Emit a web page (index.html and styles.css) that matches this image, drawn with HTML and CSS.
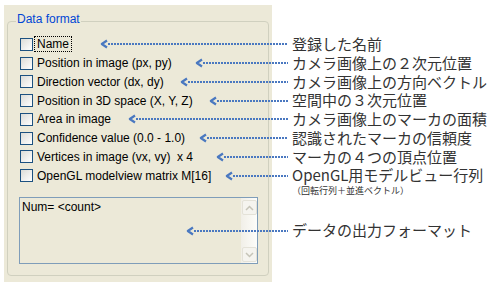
FILE: index.html
```html
<!DOCTYPE html>
<html lang="ja">
  <head>
    <meta charset="utf-8" />

    <title>Data format</title>

    <link rel="stylesheet" href="styles.css">
  </head>

  <body>
    <div class="panel">
      <fieldset class="group">
        <legend>Data format</legend>

        <div class="option">
          <input type="checkbox" class="check" />
          <span class="label focused">Name</span>
          <span class="arrow"><svg width="8" height="10"><polyline points="7,1.5 1.8,5 7,8.5" /></svg><span class="dots"></span></span>
          <span class="note">登録した名前</span>
        </div>

        <div class="option">
          <input type="checkbox" class="check" />
          <span class="label">Position in image (px, py)</span>
          <span class="arrow"><svg width="8" height="10"><polyline points="7,1.5 1.8,5 7,8.5" /></svg><span class="dots"></span></span>
          <span class="note">カメラ画像上の２次元位置</span>
        </div>

        <div class="option">
          <input type="checkbox" class="check" />
          <span class="label">Direction vector (dx, dy)</span>
          <span class="arrow"><svg width="8" height="10"><polyline points="7,1.5 1.8,5 7,8.5" /></svg><span class="dots"></span></span>
          <span class="note">カメラ画像上の方向ベクトル</span>
        </div>

        <div class="option">
          <input type="checkbox" class="check" />
          <span class="label">Position in 3D space (X, Y, Z)</span>
          <span class="arrow"><svg width="8" height="10"><polyline points="7,1.5 1.8,5 7,8.5" /></svg><span class="dots"></span></span>
          <span class="note">空間中の３次元位置</span>
        </div>

        <div class="option">
          <input type="checkbox" class="check" />
          <span class="label">Area in image</span>
          <span class="arrow"><svg width="8" height="10"><polyline points="7,1.5 1.8,5 7,8.5" /></svg><span class="dots"></span></span>
          <span class="note">カメラ画像上のマーカの面積</span>
        </div>

        <div class="option">
          <input type="checkbox" class="check" />
          <span class="label">Confidence value (0.0 - 1.0)</span>
          <span class="arrow"><svg width="8" height="10"><polyline points="7,1.5 1.8,5 7,8.5" /></svg><span class="dots"></span></span>
          <span class="note">認識されたマーカの信頼度</span>
        </div>

        <div class="option">
          <input type="checkbox" class="check" />
          <span class="label">Vertices in image (vx, vy)&nbsp; x 4</span>
          <span class="arrow"><svg width="8" height="10"><polyline points="7,1.5 1.8,5 7,8.5" /></svg><span class="dots"></span></span>
          <span class="note">マーカの４つの頂点位置</span>
        </div>

        <div class="option">
          <input type="checkbox" class="check" />
          <span class="label">OpenGL modelview matrix M[16]</span>
          <span class="arrow"><svg width="8" height="10"><polyline points="7,1.5 1.8,5 7,8.5" /></svg><span class="dots"></span></span>
          <span class="note">OpenGL用モデルビュー行列<span class="sub">（回転行列＋並進ベクトル）</span></span>
        </div>

        <div class="output-row">
          <div class="output">
            <p class="output-text">Num= &lt;count&gt;</p>
            <div class="scrollbar">
              <span class="scroll-btn"><svg width="9" height="6"><polyline points="1,5 4.5,1.5 8,5" /></svg></span>
              <span class="scroll-btn"><svg width="9" height="6"><polyline points="1,1 4.5,4.5 8,1" /></svg></span>
            </div>
          </div>
          <span class="arrow"><svg width="8" height="10"><polyline points="7,1.5 1.8,5 7,8.5" /></svg><span class="dots"></span></span>
          <span class="note">データの出力フォーマット</span>
        </div>
      </fieldset>
    </div>
  </body>
</html>
```

FILE: styles.css
```css
body {
    margin: 0;
    background-color: white;
    font-family: "Liberation Sans", Arial, sans-serif;
}

.panel {
    box-sizing: border-box;
    width: 268px;
    height: 277px;
    margin: 5px 0 0 4px;
    padding: 7px 0 0 3px;
    background-color: #ECE9D8;
}

.group {
    box-sizing: border-box;
    width: 262px;
    min-width: 0;
    margin: 0;
    padding: 5px 0 11px 12px;
    border: 1px solid #D0D0BF;
    border-radius: 4px;
}

.group legend {
    margin-left: -4px;
    padding: 0 1px 4px;
    font-size: 12px;
    line-height: 14px;
    color: #0046D5;
}

.option {
    display: flex;
    align-items: center;
    width: 480px;
    height: 18.75px;
}

.check {
    appearance: none;
    -webkit-appearance: none;
    box-sizing: border-box;
    flex: none;
    width: 13px;
    height: 13px;
    margin: 0;
    border: 1px solid #1C5180;
    background: linear-gradient(135deg, #DCDCD7, #FFFFFF);
}

.label {
    margin-left: 2px;
    padding: 0 2px;
    font-size: 12px;
    line-height: 14px;
    color: black;
    white-space: nowrap;
}

.focused {
    outline: 1px dotted black;
}

/* blue dotted pointers */
.arrow {
    display: flex;
    flex: none;
    align-items: center;
    height: 10px;
    margin-left: auto;
    margin-right: 4px;
}

.arrow svg {
    flex: none;
}

.arrow polyline {
    fill: none;
    stroke: #4A78C0;
    stroke-width: 2.2;
    stroke-linejoin: round;
}

.dots {
    flex: 1;
    height: 2px;
    background: repeating-linear-gradient(to right, #4A78C0 0 2px, transparent 2px 3px);
}

.option:nth-of-type(1) .arrow { width: 188px; }
.option:nth-of-type(2) .arrow { width: 93px; }
.option:nth-of-type(3) .arrow { width: 108px; }
.option:nth-of-type(4) .arrow { width: 79px; }
.option:nth-of-type(5) .arrow { width: 160px; }
.option:nth-of-type(6) .arrow { width: 89px; }
.option:nth-of-type(7) .arrow { width: 72px; }
.option:nth-of-type(8) .arrow { width: 63px; }

.note {
    flex: none;
    align-self: flex-start;
    width: 208px;
    font-family: "Noto Sans CJK JP", sans-serif;
    font-size: 15px;
    line-height: 18.75px;
    color: #333;
    white-space: nowrap;
}

.sub {
    display: block;
    font-size: 9px;
    line-height: 11px;
}

.output-row {
    display: flex;
    align-items: center;
    width: 481px;
    margin: 12px 0 0 -1px;
}

.output-row .arrow {
    width: 102px;
    margin-left: -72px;
}

.output-row .note {
    align-self: center;
}

.output {
    box-sizing: border-box;
    display: flex;
    justify-content: space-between;
    flex: none;
    width: 239px;
    height: 67px;
    border: 1px solid #7F9DB9;
    background-color: #ECE9D8;
}

.output-text {
    margin: 0;
    padding: 2px 0 0 2px;
    font-size: 12px;
    line-height: 14px;
    color: black;
}

.scrollbar {
    display: flex;
    flex-direction: column;
    justify-content: space-between;
    width: 16px;
    padding: 2px 0 1px 1px;
    box-sizing: border-box;
    background: linear-gradient(to right, #F1EFE8, #FDFDFA);
}

.scroll-btn {
    box-sizing: border-box;
    display: flex;
    align-items: center;
    justify-content: center;
    width: 15px;
    height: 15px;
    border: 1px solid #E4E2D8;
    border-radius: 2px;
    background-color: #F5F4EF;
}

.scroll-btn polyline {
    fill: none;
    stroke: #C6C4B8;
    stroke-width: 1.5;
}
```
